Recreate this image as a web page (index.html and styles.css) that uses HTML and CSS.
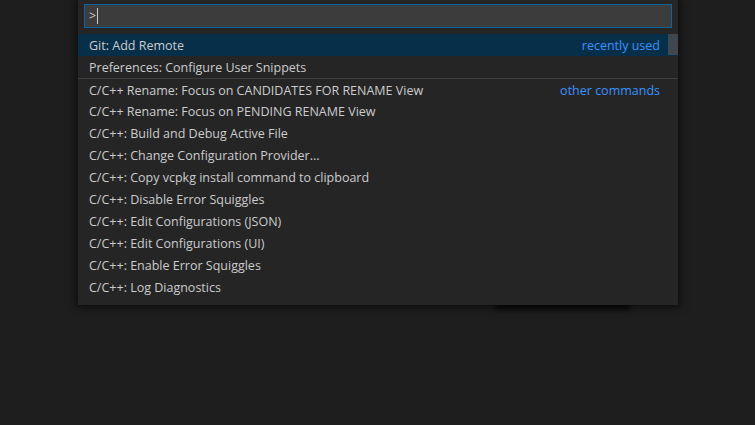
FILE: index.html
```html
<!DOCTYPE html>
<html>
<head>
<meta charset="utf-8">
<link rel="stylesheet" href="styles.css">
</head>
<body>
<div class="backdrop"></div>
<div class="widget">
  <div class="input-wrap">
    <div class="input"><span class="prompt">&gt;</span><span class="caret"></span></div>
  </div>
  <div class="list">
    <div class="scrollbar"></div>
    <div class="row selected"><span class="label">Git: Add Remote</span><span class="tag">recently used</span></div>
    <div class="row"><span class="label">Preferences: Configure User Snippets</span></div>
    <div class="row separated"><span class="label">C/C++ Rename: Focus on CANDIDATES FOR RENAME View</span><span class="tag">other commands</span></div>
    <div class="row"><span class="label">C/C++ Rename: Focus on PENDING RENAME View</span></div>
    <div class="row"><span class="label">C/C++: Build and Debug Active File</span></div>
    <div class="row"><span class="label">C/C++: Change Configuration Provider...</span></div>
    <div class="row"><span class="label">C/C++: Copy vcpkg install command to clipboard</span></div>
    <div class="row"><span class="label">C/C++: Disable Error Squiggles</span></div>
    <div class="row"><span class="label">C/C++: Edit Configurations (JSON)</span></div>
    <div class="row"><span class="label">C/C++: Edit Configurations (UI)</span></div>
    <div class="row"><span class="label">C/C++: Enable Error Squiggles</span></div>
    <div class="row"><span class="label">C/C++: Log Diagnostics</span></div>
  </div>
</div>
</body>
</html>
```
FILE: styles.css
```css
html, body {
  margin: 0;
  padding: 0;
  width: 755px;
  height: 425px;
  background: #1e1e1e;
  overflow: hidden;
  font-family: "Open Sans", "Noto Sans", sans-serif;
  font-size: 12.5px;
  color: #cccccc;
}
body {
  position: relative;
}
.backdrop {
  position: absolute;
  left: 495px;
  top: 290px;
  width: 135px;
  height: 15px;
  box-shadow: 0 5px 5px rgba(0,0,0,0.6);
  background: transparent;
}
.widget {
  position: absolute;
  left: 78px;
  top: 0;
  width: 600px;
  height: 305px;
  background: #252526;
  box-shadow: 0 0 8px 2px rgba(0,0,0,0.6);
  display: flex;
  flex-direction: column;
}
.input-wrap {
  padding: 4px 6px 5px 6px;
}
.input {
  height: 22px;
  background: #3c3c3c;
  border: 1px solid #0e639c;
  display: flex;
  align-items: center;
  padding-left: 4px;
}
.prompt {
  color: #cccccc;
  line-height: 22px;
}
.caret {
  display: inline-block;
  width: 1px;
  height: 16px;
  background: #cccccc;
  margin-left: 1px;
}
.list {
  position: relative;
  display: flex;
  flex-direction: column;
  padding-top: 1px;
}
.scrollbar {
  position: absolute;
  right: 0;
  top: 1px;
  width: 10px;
  height: 21px;
  background: #4a4a4d;
  opacity: 0.85;
}
.row {
  height: 22px;
  display: flex;
  align-items: center;
  justify-content: space-between;
  padding: 0 18px 0 11px;
  white-space: nowrap;
}
.row.selected {
  background: #062f4a;
}
.row.separated {
  border-top: 1px solid #3e3e3e;
  box-sizing: border-box;
  height: 22px;
  padding-top: 2px;
}
.tag {
  color: #3794ff;
}
```
